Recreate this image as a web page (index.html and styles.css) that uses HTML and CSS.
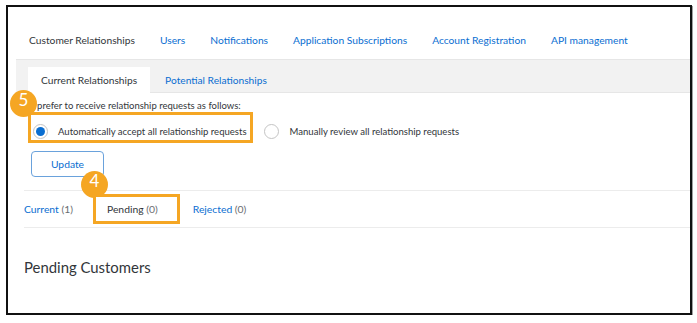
FILE: index.html
```html
<!DOCTYPE html>
<html lang="en">
<head>
  <meta charset="UTF-8">
  <meta name="viewport" content="width=device-width, initial-scale=1.0">
  <link rel="stylesheet" href="styles.css">
</head>
<body>
  <div class="frame">
    <nav class="topnav">
      <span class="nav-current">Customer Relationships</span>
      <a href="#">Users</a>
      <a href="#">Notifications</a>
      <a href="#">Application Subscriptions</a>
      <a href="#">Account Registration</a>
      <a href="#">API management</a>
    </nav>

    <div class="subtabs">
      <span class="subtab active">Current Relationships</span>
      <a class="subtab" href="#">Potential Relationships</a>
    </div>

    <section class="prefs">
      <p class="prefs-label">I prefer to receive relationship requests as follows:</p>
      <div class="radio-row">
        <label class="radio-opt highlight"><span class="radio checked"></span>Automatically accept all relationship requests</label>
        <label class="radio-opt"><span class="radio"></span>Manually review all relationship requests</label>
      </div>
      <button class="btn">Update</button>
    </section>

    <div class="status-tabs">
      <a class="status" href="#">Current <span class="count">(1)</span></a>
      <span class="status pending">Pending <span class="count">(0)</span></span>
      <a class="status" href="#">Rejected <span class="count">(0)</span></a>
    </div>

    <h2 class="section-title">Pending Customers</h2>

    <span class="badge badge-5">5</span>
    <span class="badge badge-4">4</span>
  </div>
</body>
</html>
```

FILE: styles.css
```css
body {
  margin: 0;
  background-color: #fff;
  font-family: 'Lato', 'Liberation Sans', sans-serif;
  color: #32363a;
}

a {
  color: #0a6ed1;
  text-decoration: none;
}

.frame {
  position: relative;
  box-sizing: border-box;
  width: 686px;
  height: 310px;
  margin: 5px 0 0 6px;
  border: 2px solid #111;
  box-shadow: 1px 1px 0 #a0a0a0;
  overflow: hidden;
}

.topnav {
  display: flex;
  gap: 25px;
  padding: 26px 0 12px 21px;
  font-size: 10.25px;
  line-height: 14px;
}

.subtabs {
  display: flex;
  align-items: flex-end;
  box-sizing: border-box;
  height: 34px;
  margin-left: 8px;
  padding-left: 12px;
  background-color: #f2f2f2;
  border-top: 1px solid #e6e6e6;
  border-bottom: 1px solid #e6e6e6;
  font-size: 10.2px;
}

.subtab {
  height: 26px;
  line-height: 26px;
  padding: 0 13px;
  margin-bottom: -1px;
}

.subtab.active {
  background-color: #fff;
}

.subtab + .subtab {
  padding-left: 15px;
}

.prefs {
  padding-left: 24px;
}

.prefs-label {
  margin: 7px 0 0;
  font-size: 9.5px;
  line-height: 12px;
}

.radio-row {
  display: flex;
  align-items: flex-start;
  font-size: 9.55px;
}

.radio-opt {
  display: flex;
  align-items: center;
  gap: 10px;
  padding: 12px 3px 4px 5px;
  line-height: 15px;
}

.radio-opt.highlight {
  position: relative;
  z-index: 2;
  margin-left: -4px;
  padding: 9px 3px 1px 2px;
  background-color: #fff;
  border: 3px solid #f5a623;
}

.radio-opt + .radio-opt {
  margin-left: 6px;
  gap: 11px;
}

.radio {
  box-sizing: border-box;
  width: 15px;
  height: 15px;
  border: 1px solid #c4c4c4;
  border-radius: 50%;
  display: flex;
  align-items: center;
  justify-content: center;
}

.radio.checked::after {
  content: "";
  width: 9px;
  height: 9px;
  border-radius: 50%;
  background-color: #0a6ed1;
}

.btn {
  box-sizing: border-box;
  width: 73px;
  height: 26px;
  margin: 8px 0 0 -1px;
  background-color: #fff;
  border: 1px solid #6aa2dc;
  border-radius: 4px;
  color: #0a6ed1;
  font-family: inherit;
  font-size: 10.3px;
}

.status-tabs {
  display: flex;
  align-items: center;
  margin: 13px 0 0 16px;
  padding: 3px 0;
  border-top: 1px solid #ececec;
  border-bottom: 1px solid #ececec;
  font-size: 10.35px;
}

.status {
  line-height: 24px;
}

.count {
  color: #6a6d70;
}

.status.pending {
  position: relative;
  z-index: 2;
  margin: 0 13px 0 20px;
  padding: 0 19px 0 11px;
  background-color: #fff;
  border: 3px solid #f5a623;
}

.section-title {
  margin: 29px 0 0 16px;
  font-size: 14.9px;
  font-weight: normal;
  line-height: 20px;
}

.badge {
  position: absolute;
  z-index: 1;
  width: 27px;
  height: 27px;
  border-radius: 50%;
  background-color: #f5a623;
  color: #fff;
  font-size: 17px;
  line-height: 20px;
  text-align: center;
}

.badge-5 {
  left: 2px;
  top: 83px;
}

.badge-4 {
  left: 73px;
  top: 164px;
}
```
